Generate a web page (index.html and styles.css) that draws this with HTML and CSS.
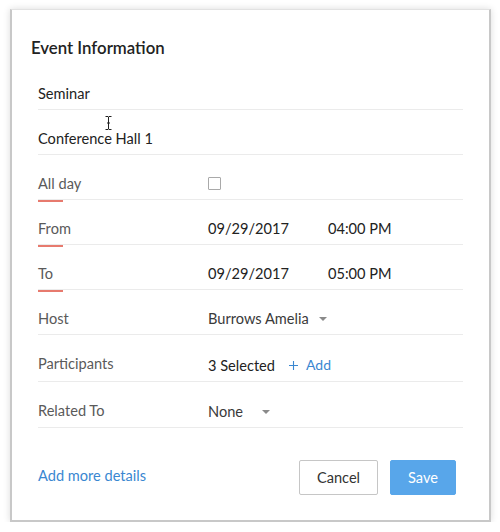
FILE: index.html
```html
<!DOCTYPE html>
<html>
<head>
<meta charset="utf-8">
<link rel="stylesheet" href="styles.css">
</head>
<body>
<div class="card">
  <h2 class="title">Event Information</h2>
  <div class="form">
    <div class="row"><span class="value">Seminar</span></div>
    <div class="row"><span class="value">Conference Hall 1</span></div>
    <div class="row">
      <span class="label req">All day</span>
      <span class="checkbox"></span>
    </div>
    <div class="row">
      <span class="label req">From</span>
      <span class="value date">09/29/2017</span>
      <span class="value">04:00 PM</span>
    </div>
    <div class="row">
      <span class="label req">To</span>
      <span class="value date">09/29/2017</span>
      <span class="value">05:00 PM</span>
    </div>
    <div class="row">
      <span class="label">Host</span>
      <span class="value select">Burrows Amelia <i class="caret"></i></span>
    </div>
    <div class="row tall">
      <span class="label">Participants</span>
      <span class="value">3 Selected</span>
      <a class="add">
        <svg class="plus" width="9" height="9" viewBox="0 0 9 9"><path d="M4.5 0v9M0 4.5h9" stroke="#3a87d1" stroke-width="1.1" fill="none"/></svg>
        Add
      </a>
    </div>
    <div class="row mid">
      <span class="label">Related To</span>
      <span class="value select none">None <i class="caret"></i></span>
    </div>
  </div>
  <div class="footer">
    <a class="more">Add more details</a>
    <div class="actions">
      <button class="btn cancel">Cancel</button>
      <button class="btn save">Save</button>
    </div>
  </div>
  <svg class="ibeam" width="7" height="14" viewBox="0 0 7 14">
    <path d="M0.5 0.5h2.5l0.5 0.5l0.5-0.5h2.5M3.5 1v12M0.5 13.5h2.5l0.5-0.5l0.5 0.5h2.5M2 7h3" fill="none" stroke="#222" stroke-width="1"/>
  </svg>
</div>
</body>
</html>
```
FILE: styles.css
```css
html, body {
  margin: 0;
  background: #fff;
}

body {
  font-family: Lato, "Open Sans", sans-serif;
  font-size: 14.6px;
  color: #222;
}

.card {
  position: relative;
  box-sizing: border-box;
  width: 481px;
  height: 513px;
  margin: 9px 0 0 10px;
  border: 1px solid #d4d4d4;
  border-left-width: 2px;
  border-right-width: 2px;
  border-bottom-width: 2px;
  border-color: #e2e2e2 #c8c8c8 #c8c8c8 #c8c8c8;
  box-shadow: 0 0 7px rgba(0, 0, 0, 0.14);
  background: #fff;
}

.title {
  margin: 0;
  height: 55px;
  box-sizing: border-box;
  padding: 28px 0 0 19px;
  font-size: 16.8px;
  font-weight: 600;
  line-height: 20px;
  color: #222;
}

.form {
  padding: 0 26px 0 26px;
}

.row {
  position: relative;
  display: flex;
  align-items: flex-start;
  box-sizing: border-box;
  height: 45px;
  padding-top: 20px;
  line-height: 18px;
  border-bottom: 1px solid #ebebeb;
}

.row.tall { height: 47px; }
.row.mid { height: 46px; }

.label {
  position: relative;
  width: 170px;
  flex: none;
  color: #5a5a5a;
}

.label.req::after {
  content: "";
  position: absolute;
  left: 0;
  top: 25px;
  width: 25px;
  height: 2px;
  background: #e77a6e;
}

.value { color: #222; }

.value.date {
  width: 120px;
  flex: none;
}

.row.tall .value { margin-top: 2px; }
.row.mid .value { margin-top: 1px; }

.checkbox {
  width: 11px;
  height: 11px;
  margin-top: 2px;
  border: 1px solid #a9a9a9;
  border-radius: 1px;
}

.select {
  display: inline-flex;
  align-items: center;
  color: #3a3a3a;
}

.caret {
  width: 0;
  height: 0;
  margin-left: 10px;
  border-left: 4.5px solid transparent;
  border-right: 4.5px solid transparent;
  border-top: 4.5px solid #8a8a8a;
}

.select.none .caret { margin-left: 19px; }

.add {
  display: inline-flex;
  align-items: center;
  margin: 1px 0 0 14px;
  color: #3a87d1;
  font-size: 14px;
}

.plus {
  margin-right: 8px;
}

.footer {
  display: flex;
  justify-content: space-between;
  align-items: flex-start;
  padding: 32px 33px 0 26px;
}

.more {
  margin-top: 7px;
  color: #3a87d1;
  line-height: 18px;
}

.actions {
  display: flex;
  gap: 12px;
}

.btn {
  height: 35px;
  box-sizing: border-box;
  border-radius: 2px;
  font-family: inherit;
  font-size: 14.6px;
  padding: 0;
}

.cancel {
  width: 79px;
  background: #fff;
  border: 1px solid #c6c6c6;
  color: #333;
}

.save {
  width: 66px;
  background: #58a6ea;
  border: 1px solid #58a6ea;
  color: #fff;
}

.ibeam {
  position: absolute;
  left: 93px;
  top: 106px;
}
```
